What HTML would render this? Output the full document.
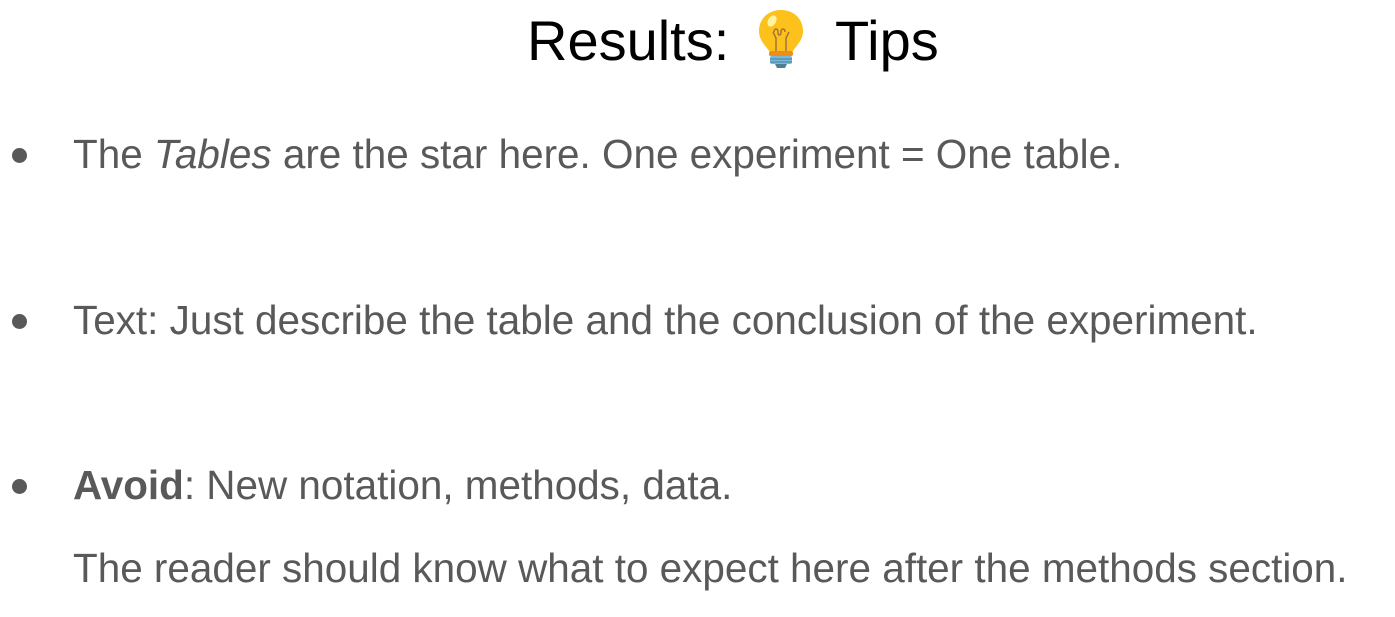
<!DOCTYPE html>
<html><head><style>
body{margin:0;width:1395px;height:617px;background:#fff;font-family:"Liberation Sans",Arial,sans-serif;position:relative;overflow:hidden}
.t{position:absolute;white-space:nowrap}
.title{font-size:56px;color:#000;top:1px;line-height:80px}
.b{font-size:40.45px;color:#595959;left:73px;line-height:40px}
.d{position:absolute;left:12px;width:15px;height:15px;border-radius:50%;background:#595959}
</style></head><body>
<div class="t title" style="left:527px">Results:</div>
<div class="t title" style="left:835px">Tips</div>
<svg style="position:absolute;left:755px;top:8px" width="52" height="62" viewBox="0 0 52 62">
<path d="M26 2C13 2 4 11 4 23c0 9 6 14 10 20h24c4-6 10-11 10-20C48 11 39 2 26 2z" fill="#fcc21b"/>
<ellipse cx="17" cy="13" rx="4" ry="6" fill="#fff3a0" transform="rotate(30 17 13)"/>
<path d="M21 43V30l-3-6M31 43V30l3-6M19 24c0-4 4-4 4 0s3 4 3 0 4-4 4 0" stroke="#a5713b" stroke-width="1.5" fill="none"/>
<rect x="14" y="43" width="24" height="5" rx="2" fill="#ef8c1a"/>
<rect x="15" y="48" width="22" height="8" rx="2" fill="#7bb8d6"/>
<path d="M15 51h22M15 54h22" stroke="#4a8db0" stroke-width="1.2"/>
<path d="M20 56h12l-2 4h-8z" fill="#4a7f96"/>
</svg>
<div class="d" style="top:148px"></div>
<div class="t b" style="top:134px">The <i>Tables</i> are the star here. One experiment = One table.</div>
<div class="d" style="top:314px"></div>
<div class="t b" style="top:300px">Text: Just describe the table and the conclusion of the experiment.</div>
<div class="d" style="top:479px"></div>
<div class="t b" style="top:465px"><b>Avoid</b>: New notation, methods, data.</div>
<div class="t b" style="top:548px">The reader should know what to expect here after the methods section.</div>
</body></html>
